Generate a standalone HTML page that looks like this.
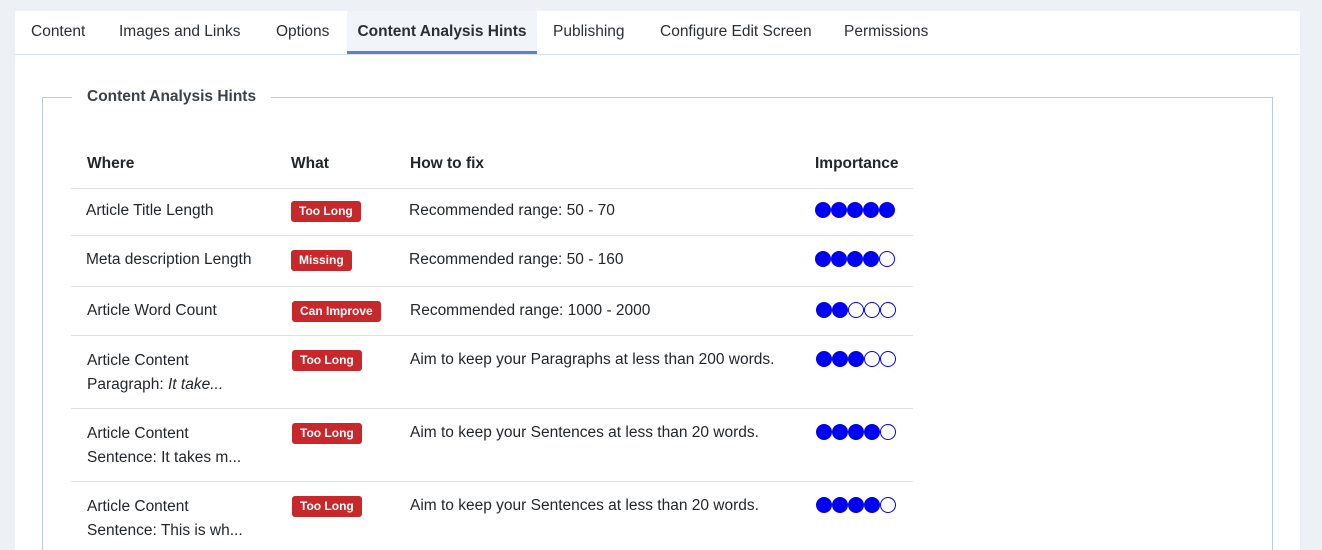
<!DOCTYPE html>
<html><head><meta charset="utf-8"><style>
html,body{margin:0;width:1322px;height:550px;overflow:hidden}
body{background:#edf1f6;font-family:"Liberation Sans",sans-serif;color:#22262a;position:relative}
.card{position:absolute;left:15px;top:11px;width:1285px;height:539px;background:#fff}
.tabs{position:absolute;left:0;top:0;width:1285px;height:43px;border-bottom:1px solid #dde3ec}
.tab{position:absolute;top:1px;height:42px;line-height:40px;font-size:15.5px;color:#2a2f36}
.tab.act{top:0;background:#f1f4f8;font-weight:bold;border-bottom:3px solid #5a84c4;height:40px;line-height:42px;padding:0 10px;width:170px;text-align:center}
.fs{position:absolute;left:42px;top:97px;width:1229px;height:452px;border:1px solid #b8c9e2;border-bottom:none}
.leg{position:absolute;left:72px;top:88px;background:#fff;padding:0 15px;font-weight:bold;font-size:15.5px;color:#3b4148}
.t{position:absolute;font-size:15.5px}
.line{position:absolute;left:71px;width:842px;height:1px;background:#dfe2e6}
.b{position:absolute;background:#c6282b;color:#fff;font-weight:bold;font-size:12px;border-radius:3px;height:21px;line-height:21px;padding:0 8px}
.dots{position:absolute;display:flex}
.d{width:16px;height:16px;border-radius:50%;border:1.5px solid #0000f5;box-sizing:border-box;margin-right:0}
.f{background:#0000f5}
</style></head><body>
<div class="card">
<div class="tabs">
<div class="tab" style="left:16px">Content</div>
<div class="tab" style="left:104px">Images and Links</div>
<div class="tab" style="left:261px">Options</div>
<div class="tab act" style="left:332px">Content Analysis Hints</div>
<div class="tab" style="left:538px">Publishing</div>
<div class="tab" style="left:645px">Configure Edit Screen</div>
<div class="tab" style="left:829px">Permissions</div>
</div>
</div>
<div class="fs"></div>
<div class="leg">Content Analysis Hints</div>

<div class="t" style="left:87px;top:155px;font-weight:bold">Where</div>
<div class="t" style="left:291px;top:155px;font-weight:bold">What</div>
<div class="t" style="left:410px;top:155px;font-weight:bold">How to fix</div>
<div class="t" style="left:815px;top:155px;font-weight:bold">Importance</div>
<div class="line" style="top:188px"></div>

<div class="t" style="left:86px;top:202px">Article Title Length</div>
<div class="b" style="left:291px;top:201px">Too Long</div>
<div class="t" style="left:409px;top:202px">Recommended range: 50 - 70</div>
<div class="dots" style="left:815px;top:202px"><i class="d f"></i><i class="d f"></i><i class="d f"></i><i class="d f"></i><i class="d f"></i></div>
<div class="line" style="top:235px"></div>

<div class="t" style="left:86px;top:251px">Meta description Length</div>
<div class="b" style="left:291px;top:250px">Missing</div>
<div class="t" style="left:409px;top:251px">Recommended range: 50 - 160</div>
<div class="dots" style="left:815px;top:251px"><i class="d f"></i><i class="d f"></i><i class="d f"></i><i class="d f"></i><i class="d"></i></div>
<div class="line" style="top:286px"></div>

<div class="t" style="left:87px;top:302px">Article Word Count</div>
<div class="b" style="left:292px;top:301px">Can Improve</div>
<div class="t" style="left:410px;top:302px">Recommended range: 1000 - 2000</div>
<div class="dots" style="left:816px;top:302px"><i class="d f"></i><i class="d f"></i><i class="d"></i><i class="d"></i><i class="d"></i></div>
<div class="line" style="top:335px"></div>

<div class="t" style="left:87px;top:349px;line-height:24px">Article Content<br>Paragraph: <i>It take...</i></div>
<div class="b" style="left:292px;top:350px">Too Long</div>
<div class="t" style="left:410px;top:351px">Aim to keep your Paragraphs at less than 200 words.</div>
<div class="dots" style="left:816px;top:351px"><i class="d f"></i><i class="d f"></i><i class="d f"></i><i class="d"></i><i class="d"></i></div>
<div class="line" style="top:408px"></div>

<div class="t" style="left:87px;top:422px;line-height:24px">Article Content<br>Sentence: It takes m...</div>
<div class="b" style="left:292px;top:423px">Too Long</div>
<div class="t" style="left:410px;top:424px">Aim to keep your Sentences at less than 20 words.</div>
<div class="dots" style="left:816px;top:424px"><i class="d f"></i><i class="d f"></i><i class="d f"></i><i class="d f"></i><i class="d"></i></div>
<div class="line" style="top:481px"></div>

<div class="t" style="left:87px;top:495px;line-height:24px">Article Content<br>Sentence: This is wh...</div>
<div class="b" style="left:292px;top:496px">Too Long</div>
<div class="t" style="left:410px;top:497px">Aim to keep your Sentences at less than 20 words.</div>
<div class="dots" style="left:816px;top:497px"><i class="d f"></i><i class="d f"></i><i class="d f"></i><i class="d f"></i><i class="d"></i></div>
</body></html>
